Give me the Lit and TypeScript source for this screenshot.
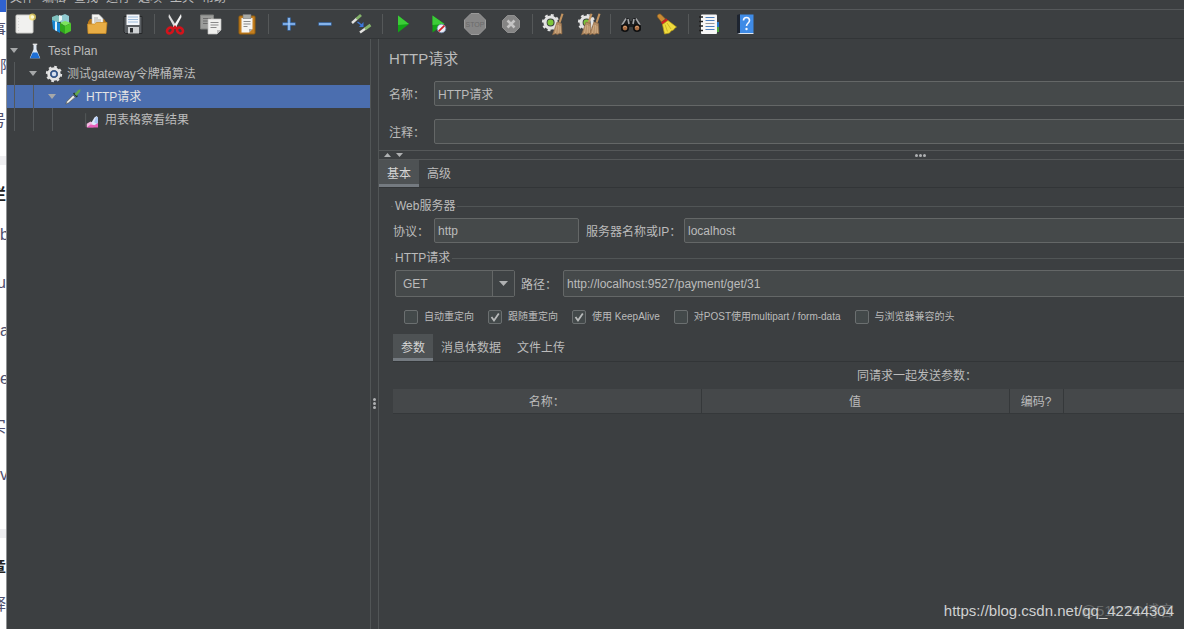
import { LitElement, html, css, svg, nothing } from "lit";
import { customElement, property, state } from "lit/decorators.js";
import { classMap } from "lit/directives/class-map.js";
import { styleMap } from "lit/directives/style-map.js";

const gear = svg`
  <circle cx="12" cy="12" r="7" fill="none" stroke="#e3e3e3" stroke-width="4"/>
  <circle cx="12" cy="12" r="9.6" fill="none" stroke="#e3e3e3" stroke-width="2.6" stroke-dasharray="3.6 3.94"/>`;

const broom = (x: number) => svg`
  <path d="M${x + 4.5} 1.500l2 .6-3 9-2-.6z" fill="#c2935f"/>
  <path d="M${x} 10l4.500 1.500 .5 10.500-2.500-.6-2 1.200-2-.8-3 1z" fill="#b58e66" stroke="#8b6642" stroke-width=".6"/>
  <path d="M${x} 13l-1.500 8M${x + 1.5} 13l-.3 8M${x + 3} 14l.4 7" stroke="#d9b78f" stroke-width=".7"/>`;

const ICONS: Record<string, unknown> = {
  new: svg`<rect x="3" y="3" width="17" height="18" rx="1" fill="#f1f1ef" stroke="#cfcfcb"/>
    <path d="M5.500 6v13" stroke="#d8d8d8" stroke-dasharray="1 2"/>
    <circle cx="19.500" cy="5" r="3.500" fill="#f4dc62" opacity=".75"/><circle cx="19.500" cy="5" r="1.800" fill="#fffbd0"/>`,
  templates: svg`<path d="M3 5l5-2 4 2v5H3z" fill="#7fc0bd"/><path d="M11 4l5-2 4 2v7h-8z" fill="#8fc9cf"/>
    <path d="M3 8l8 3v10l-7-4z" fill="#1585d2"/><path d="M6 9.300l2 .8v9.200l-2-1z" fill="#d9f0ff"/>
    <path d="M11 11l5-2 6 2-6 3z" fill="#7ce45c"/><path d="M11 11l5 3v8l-5-3z" fill="#2fa81c"/><path d="M16 14l6-3v8l-6 3z" fill="#4cc62c"/>
    <path d="M10 3l3 1v4l-3 2z" fill="#e8f5f5"/>`,
  open: svg`<path d="M3 10l2-3h14l2 3v11H3z" fill="#b9781a"/>
    <path d="M7 2.500h7l4 4V16H7z" fill="#f5f5f2" stroke="#bbb" stroke-width=".6"/><path d="M9 6h4M9 8h7M9 10h7" stroke="#999" stroke-width=".8"/>
    <path d="M2.500 12h7l2-1.500h10.500L21 21.500H3z" fill="#e8ad45" stroke="#c88920" stroke-width=".7"/>`,
  save: svg`<path d="M3 4.500h18v17H4.500L3 20z" fill="#5a5e62" stroke="#26282a"/>
    <rect x="5.500" y="2.500" width="13" height="10.500" fill="#f3f6fa"/><path d="M7 5h10M7 7.500h10M7 10h10" stroke="#9dbbd9" stroke-width="1"/>
    <rect x="7" y="15" width="11" height="6.500" fill="#cfd2d4"/><rect x="9" y="16" width="3" height="4.500" fill="#2b2e31"/>`,
  cut: svg`<path d="M6 2l8 13-2 2L5.500 5z" fill="#dcdcdc"/><path d="M18 2l-8 13 2 2 6.500-12z" fill="#f5f5f5"/>
    <ellipse cx="7" cy="18.500" rx="3.200" ry="2.600" transform="rotate(-40 7 18.500)" fill="none" stroke="#d3131b" stroke-width="2.600"/>
    <ellipse cx="17" cy="18.500" rx="3.200" ry="2.600" transform="rotate(40 17 18.500)" fill="none" stroke="#d3131b" stroke-width="2.600"/>
    <path d="M9.500 16l2.500-3 2.500 3-2.500 1.500z" fill="#d3131b"/>`,
  copy: svg`<path d="M1.500 3h13v14h-13z" fill="#9b9c9a" stroke="#7d7e7c"/><path d="M4 6.500h8M4 9h5M4 11.500h5" stroke="#6c6c6c"/>
    <path d="M9 7h13v11l-4 4H9z" fill="#f0f0ee" stroke="#bdbdbb" stroke-width=".7"/><path d="M11.500 10.500h8M11.500 13h8M11.500 15.500h6" stroke="#8a8a8a"/><path d="M18 22v-4h4z" fill="#bbb"/>`,
  paste: svg`<rect x="4" y="4" width="16" height="18" rx="1" fill="#c57f1f" stroke="#96600f"/>
    <path d="M6.500 6h11v11l-3.500 3.500H6.500z" fill="#f4f4f2"/><path d="M8 2.500h8v4H8z" fill="#a8aaa6" stroke="#777" stroke-width=".6"/>
    <path d="M8.500 9.500h7M8.500 12h7M8.500 14.500h4" stroke="#8a8a8a"/><path d="M14 20.500V17h3.500z" fill="#aaa"/>`,
  expand: svg`<path d="M12 5.500v13M5.500 12h13" stroke="#3f7fd0" stroke-width="3.200"/><path d="M12 6v12M6 12h12" stroke="#b5d6fb" stroke-width="1.200"/>`,
  collapse: svg`<path d="M5.500 12h13" stroke="#3f7fd0" stroke-width="3.200"/><path d="M6 12h12" stroke="#b5d6fb" stroke-width="1.200"/>`,
  toggle: svg`<path d="M3 11l5-4.500" stroke="#e2e2e0" stroke-width="2.400"/><path d="M7.500 7l4.500-4" stroke="#86b56b" stroke-width="2.800"/>
    <path d="M11 20.500l5.500-4" stroke="#e2e2e0" stroke-width="2.400"/><path d="M16 17l5.500-4" stroke="#86b56b" stroke-width="2.800"/>
    <path d="M8.500 10l4 3" stroke="#3c78dc" stroke-width="1.500"/><path d="M14.500 10v5H10z" fill="#3c78dc"/>`,
  start: svg`<path d="M7 3.500l11 8.500L7 20.500z" fill="#12a316"/><path d="M7 3.500l11 8.500L7 13z" fill="#3ccc38"/>`,
  startNoPause: svg`<path d="M5.500 3.500l12 8.500-12 8.500z" fill="#12a316"/><path d="M5.500 3.500l12 8.500-12 1z" fill="#3ccc38"/>
    <circle cx="14.500" cy="16.500" r="4.300" fill="#e9edf5" stroke="#7289b2" stroke-width=".8"/><path d="M11.600 19.400l5.800-5.800" stroke="#d0202a" stroke-width="1.700"/>`,
  stop: svg`<path d="M8 1.500h8l6.500 6.500v8L16 22.500H8L1.500 16V8z" fill="#868686" stroke="#999"/>
    <text x="12" y="15" text-anchor="middle" font-family="Liberation Sans, sans-serif" font-size="7" fill="#6a6a6a">STOP</text>`,
  shutdown: svg`<path d="M8.500 3.500h7l5 5v7l-5 5h-7l-5-5v-7z" fill="#858585" stroke="#8f8f8f"/>
    <path d="M8.500 8.500l7 7M15.500 8.500l-7 7" stroke="#c4c4c4" stroke-width="2.600"/>`,
  clear: svg`<g transform="translate(0 1) scale(.8)">${gear}</g><circle cx="9.500" cy="10.500" r="3" fill="#7cc63a"/>${broom(16)}`,
  clearAll: svg`<g transform="translate(0 1) scale(.8)">${gear}</g><circle cx="9.500" cy="10.500" r="3" fill="#7cc63a"/>${broom(9)}${broom(17)}`,
  search: svg`<path d="M6 6h4l1 3h2l1-3h4l4 8-.5 5h-6l-2-4h-3l-2 4H2.500L2 14z" fill="#1c1e20"/>
    <path d="M7 6.500l-4 6.500M17 6.500l4 6.500M9 7l1 5M15 7l-1 5" stroke="#a3a5a7" stroke-width="1.600"/>
    <circle cx="6" cy="16" r="3.200" fill="#a86d43" stroke="#0f1011" stroke-width="1.600"/><circle cx="18" cy="16" r="3.200" fill="#a86d43" stroke="#0f1011" stroke-width="1.600"/>
    <path d="M4.500 15.500c1-1.500 2-1.500 3 0M16.500 15.500c1-1.500 2-1.500 3 0" stroke="#dca67c" fill="none"/>`,
  resetSearch: svg`<path d="M2.500 5c-1-3 3-4 4-2l4 4-4 3z" fill="#c98a34" stroke="#8f5f1c" stroke-width=".6"/><path d="M6 10.500l5.500-4 1.500 2-5.500 4z" fill="#d42020"/>
    <path d="M7.500 12.500l5.500-4 8.500 6.500-2 1.500-1 1.500-2.500 1-1.500 2-2.500.5-2.500.5z" fill="#efdb3d" stroke="#b79b17" stroke-width=".7"/>
    <path d="M10 12.500l2.500 7M12 11l4 6" stroke="#c7ab20" stroke-width=".8"/>`,
  functions: svg`<rect x="17" y="10" width="5" height="5" fill="#2377c8"/><rect x="17" y="15" width="5" height="5" fill="#49a53c"/>
    <rect x="4" y="2.500" width="16" height="19.500" rx="1" fill="#f7f7f7"/>
    <path d="M8.500 5.500h9M8.500 8.500h9M8.500 14.500h9M8.500 17.500h9" stroke="#4c7fbd" stroke-width="1.200"/><path d="M8.500 11.500h9" stroke="#999"/>
    <path d="M2 5h4M2 9.500h4M2 14h4M2 18.500h4" stroke="#222" stroke-width="1.600"/>`,
  help: svg`<path d="M4 3l3-1v19l-3 1z" fill="#1d2430"/><rect x="7" y="2.500" width="13.500" height="18.500" fill="#3f8be6"/><path d="M4 22l3-1h13.500v1z" fill="#dfe6ef"/>
    <path d="M10.500 8.500c0-4 6-4 6 0 0 2.500-3 2.500-3 5.500" fill="none" stroke="#f4f8ff" stroke-width="1.600"/><circle cx="13.500" cy="17" r="1.200" fill="#f4f8ff"/>`,
  plan: svg`<path d="M10 3.500h4v6l5 12H5l5-12z" fill="#dfe8f2"/><path d="M9 14h6l3.500 7.500h-13z" fill="#1d6fd6"/><path d="M9 3h6" stroke="#fff" stroke-width="1.500"/>`,
  threads: svg`${gear}<circle cx="12" cy="12" r="5" fill="#34588f"/><circle cx="12" cy="12" r="3" fill="#d5deec"/>`,
  sampler: svg`<path d="M2.500 21.500l1-3.500L12 9.500l3 3L6 20z" fill="#d3d5d2" stroke="#4b4f4a" stroke-width=".8"/><path d="M5 19l8-8" stroke="#fff"/>
    <path d="M12 7.500l5 5 1.500-2-5-4.500z" fill="#23331f"/><path d="M14 8l5-5.500 3-1-.5 3.500-5 5.500z" fill="#63a84a"/>`,
  listener: svg`<path d="M3.500 3v18" stroke="#5c6062"/><path d="M5 21.500V17l5-3 4 2v5.500z" fill="#f3b9e0"/>
    <path d="M11 16l4-7 3-2.500 2 2V17l-5 3z" fill="#dfe8fb"/><path d="M15 15l2-6 1.500-1.500L20 9v9z" fill="#a9c6f3"/><path d="M5 22l5-4 5 1 5-3v6z" fill="#e85fbb"/>`,
};

const icon = (name: string) =>
  html`<svg viewBox="0 0 24 24" aria-hidden="true">${ICONS[name]}</svg>`;

@customElement("tool-bar")
class ToolBar extends LitElement {
  static styles = css`
    :host { display: flex; height: 28px; align-items: center; border-top: 1px solid #55585a; border-bottom: 1px solid #323537; }
    .tool { width: 36px; height: 26px; padding: 0; border: 0; background: none; display: grid; place-items: center; }
    .tool svg { width: 24px; height: 24px; display: block; }
    .sep { width: 6px; height: 20px; display: grid; justify-content: center; }
    .sep::before { content: ""; width: 1px; background: #555859; }
  `;
  private groups = [
    [["new", "新建"], ["templates", "模板"], ["open", "打开"], ["save", "保存"]],
    [["cut", "剪切"], ["copy", "复制"], ["paste", "粘贴"]],
    [["expand", "展开"], ["collapse", "收起"], ["toggle", "切换"]],
    [["start", "启动"], ["startNoPause", "无间隔启动"], ["stop", "停止"], ["shutdown", "关闭"]],
    [["clear", "清除"], ["clearAll", "清除全部"]],
    [["search", "查找"], ["resetSearch", "重置查找"]],
    [["functions", "函数助手"], ["help", "帮助"]],
  ];
  render() {
    return this.groups.map((g, i) => html`
      ${i ? html`<span class="sep"></span>` : nothing}
      ${g.map(([n, l]) => html`<button class="tool" type="button" aria-label=${l}>${icon(n)}</button>`)}`);
  }
}

@customElement("plan-tree")
class PlanTree extends LitElement {
  static styles = css`
    :host { display: block; color: #bbbbbb; }
    .row { display: flex; height: 23px; align-items: center; white-space: nowrap; }
    .row.selected { background: #4b6eaf; color: #e4e4e4; }
    .guide { width: 19px; height: 23px; box-sizing: border-box; padding-left: 7px; }
    .guide::before { content: ""; display: block; width: 1px; height: 100%; background: #55595b; }
    .toggle { width: 14px; height: 23px; padding: 0; border: 0; background: none; display: grid; place-items: center; }
    .toggle svg { width: 8px; height: 5px; display: block; }
    .icon { width: 20px; margin-left: 4px; display: grid; place-items: center; }
    .icon.leaf { margin-left: 18px; }
    .icon svg { width: 18px; height: 18px; display: block; }
    .label { margin-left: 3px; padding-top: 2px; line-height: 21px; }
  `;
  @state() private selected = 2;
  private rows = [
    { icon: "plan", label: "Test Plan" },
    { icon: "threads", label: "测试gateway令牌桶算法" },
    { icon: "sampler", label: "HTTP请求" },
    { icon: "listener", label: "用表格察看结果", leaf: true },
  ];
  render() {
    return this.rows.map((r, i) => html`
      <div class=${classMap({ row: true, selected: i === this.selected })} @click=${() => (this.selected = i)}>
        ${Array.from({ length: i }, () => html`<span class="guide"></span>`)}
        ${r.leaf ? nothing : html`<button class="toggle" type="button" aria-label="折叠">
          <svg viewBox="0 0 8 5"><path d="M0 0h8L4 5z" fill="#a6a8a9"/></svg></button>`}
        <span class=${classMap({ icon: true, leaf: !!r.leaf })}>${icon(r.icon)}</span>
        <span class="label">${r.label}</span>
      </div>`);
  }
}

@customElement("tab-strip")
class TabStrip extends LitElement {
  static styles = css`
    :host { display: flex; height: 27px; border-bottom: 1px solid #323537; }
    .tab { font: inherit; color: inherit; padding: 5px 8px 0; border: 0; border-bottom: 3px solid transparent; background: none; line-height: 19px; }
    .tab.active { background: #4e5254; border-bottom-color: #747a80; color: #d5d5d5; }
  `;
  @property({ type: Array }) tabs: string[] = [];
  @state() private active = 0;
  render() {
    return this.tabs.map((t, i) => html`<button type="button" class=${classMap({ tab: true, active: i === this.active })}
      @click=${() => (this.active = i)}>${t}</button>`);
  }
}

@customElement("http-request-panel")
class HttpRequestPanel extends LitElement {
  static styles = css`
    :host { display: block; }
    .head { padding: 10px 0 6px 10px; }
    .title { margin: 0 0 12px; font-size: 15px; font-weight: 400; line-height: 20px; }
    .fields { display: grid; grid-template-columns: 45px 1fr; row-gap: 13px; align-items: center; }
    label { white-space: nowrap; padding-top: 2px; }
    .text { box-sizing: border-box; width: 100%; min-width: 0; height: 25px; padding: 0 3px; border: 1px solid #646767; border-radius: 2px;
      background: #45494a; color: #bbbbbb; font: inherit; outline: 0; }
    .split { display: grid; grid-template-columns: 1fr auto 1fr; align-items: center; height: 8px; border-top: 1px solid #555859; border-bottom: 1px solid #555859; }
    .arrows { display: flex; gap: 5px; padding-left: 5px; }
    .arrows svg { width: 7px; height: 4px; display: block; }
    .dots { display: flex; gap: 1px; }
    .dots i { width: 3px; height: 3px; border-radius: 2px; background: #afb1b2; }
    .body { padding: 10px 0 0 12px; }
    fieldset { margin: 0 0 7px; padding: 4px 0 0; border: 0; border-top: 1px solid #515556; min-width: 0; }
    legend { margin-left: 2px; padding: 0 2px; line-height: 16px; }
    .server { display: grid; grid-template-columns: 41px 145px 105px 1fr; align-items: center; padding-left: 2px; }
    .server .second { padding-left: 7px; }
    .target { display: grid; grid-template-columns: 120px 48px 1fr; align-items: center; padding-left: 4px; }
    .target .text, .combo { height: 27px; }
    .target label { padding-left: 6px; }
    .combo { display: grid; grid-template-columns: 1fr 22px; box-sizing: border-box; border: 1px solid #646767; border-radius: 2px; background: #45494a; }
    .combo select { grid-area: 1 / 1 / 2 / 3; appearance: none; border: 0; background: none; color: inherit; font: inherit; padding: 0 7px; outline: 0; }
    .combo .drop { grid-area: 1 / 2; border-left: 1px solid #646767; background: #3f4345; display: grid; place-items: center; pointer-events: none; }
    .drop svg { width: 9px; height: 5px; display: block; }
    .checks { display: flex; gap: 14px; padding: 13px 0 3px 13px; font-size: 10px; }
    .checks label { display: flex; gap: 6px; align-items: center; line-height: 14px; padding: 0; }
    .checks input { appearance: none; box-sizing: border-box; width: 14px; height: 14px; margin: 0; border: 1px solid #6b6f70; border-radius: 2px; background: #43494a; }
    .checks input:checked { background: #43494a url("data:image/svg+xml,%3Csvg xmlns='http://www.w3.org/2000/svg' viewBox='0 0 12 12'%3E%3Cpath d='M2.500 6l2.500 3.500L9.800 2.500' fill='none' stroke='%23b8baba' stroke-width='1.800'/%3E%3C/svg%3E"); }
    .params { padding: 0 20px 0 2px; }
    table { width: 100%; table-layout: fixed; border-collapse: collapse; }
    caption { padding-top: 2px; line-height: 25px; }
    th { height: 24px; box-sizing: border-box; padding: 2px 0 0; font-weight: 400; background: #45484a; border-right: 1px solid #35383a; border-bottom: 1px solid #35383a; }
    .wide { width: 308px; }
    .narrow { width: 54px; }
  `;
  private checks: [string, boolean][] = [
    ["自动重定向", false], ["跟随重定向", true], ["使用 KeepAlive", true],
    ["对POST使用multipart / form-data", false], ["与浏览器兼容的头", false],
  ];
  render() {
    return html`
      <section class="head">
        <h1 class="title">HTTP请求</h1>
        <div class="fields">
          <label for="name">名称：</label><input class="text" id="name" .value=${"HTTP请求"}>
          <label for="note">注释：</label><input class="text" id="note">
        </div>
      </section>
      <div class="split">
        <span class="arrows">
          <svg viewBox="0 0 7 4"><path d="M0 4h7L3.500 0z" fill="#afb1b2"/></svg>
          <svg viewBox="0 0 7 4"><path d="M0 0h7L3.500 4z" fill="#afb1b2"/></svg>
        </span>
        <span class="dots"><i></i><i></i><i></i></span>
      </div>
      <tab-strip .tabs=${["基本", "高级"]}></tab-strip>
      <section class="body">
        <fieldset>
          <legend>Web服务器</legend>
          <div class="server">
            <label for="protocol">协议：</label><input class="text" id="protocol" .value=${"http"}>
            <label class="second" for="host">服务器名称或IP：</label><input class="text" id="host" .value=${"localhost"}>
          </div>
        </fieldset>
        <fieldset>
          <legend>HTTP请求</legend>
          <div class="target">
            <span class="combo">
              <select aria-label="方法"><option>GET</option><option>POST</option><option>PUT</option></select>
              <span class="drop"><svg viewBox="0 0 9 5"><path d="M0 0h9L4.500 5z" fill="#afb1b2"/></svg></span>
            </span>
            <label for="path">路径：</label><input class="text" id="path" .value=${"http://localhost:9527/payment/get/31"}>
          </div>
          <div class="checks">
            ${this.checks.map(([l, on]) => html`<label><input type="checkbox" .checked=${on}>${l}</label>`)}
          </div>
        </fieldset>
        <div class="params">
          <tab-strip .tabs=${["参数", "消息体数据", "文件上传"]}></tab-strip>
          <table>
            <caption>同请求一起发送参数：</caption>
            <thead><tr><th class="wide">名称：</th><th class="wide">值</th><th class="narrow">编码?</th><th></th></tr></thead>
          </table>
        </div>
      </section>`;
  }
}

interface Snippet { h: number; t?: string; kind?: string; end?: boolean }

@customElement("app-root")
class AppRoot extends LitElement {
  static styles = css`
    :host { display: flex; position: relative; height: 100vh; overflow: hidden; background: #3c3f41; color: #bbbbbb;
      font: 12px/16px "Liberation Sans", "Noto Sans CJK SC", sans-serif; }
    .behind { flex: none; width: 6px; overflow: hidden; background: #fff; border-right: 1px solid #8f9192; color: #50506e; font-size: 16px; line-height: 32px; }
    .line { display: flex; align-items: center; white-space: nowrap; overflow: hidden; }
    .line.end { justify-content: flex-end; }
    .line.blue { background: #2f62d0; }
    .line.band { background: #efeff1; }
    .line.heading { align-items: flex-end; font-weight: 700; color: #222; }
    .window { flex: 1; min-width: 0; margin: 0 -277px -138px 0; display: flex; flex-direction: column; }
    .menu { display: flex; gap: 8px; align-items: flex-end; height: 5px; padding: 0 0 4px 3px; line-height: 14px; }
    .menu a { color: inherit; text-decoration: none; }
    .work { flex: 1; min-height: 0; display: grid; grid-template-columns: 363px 9px 1fr; }
    .divider { box-sizing: border-box; border: solid #515556; border-width: 0 1px; display: flex; flex-direction: column; gap: 1px; align-items: center; justify-content: center; }
    .divider i { width: 3px; height: 3px; border-radius: 2px; background: #afb1b2; }
    .mark { position: absolute; right: 10px; bottom: 8px; font-size: 15px; line-height: 20px; color: #d0d1d1; }
    .mark.faint { color: #686b6c; }
  `;
  private behind: Snippet[] = [
    { h: 12, kind: "blue" }, { h: 36, t: "事", end: true }, { h: 38, t: "阿" }, { h: 70, t: "号", end: true },
    { h: 9, kind: "band" }, { h: 46, t: "栏", kind: "heading", end: true }, { h: 48, t: "b" }, { h: 48, t: "u", end: true },
    { h: 48, t: "a" }, { h: 48, t: "e" }, { h: 48, t: "实", end: true }, { h: 48, t: "v" }, { h: 30 },
    { h: 9, kind: "band" }, { h: 46, t: "章", kind: "heading", end: true }, { h: 42, t: "释", end: true },
  ];
  private menus = ["文件", "编辑", "查找", "运行", "选项", "工具", "帮助"];
  render() {
    return html`
      <aside class="behind" aria-hidden="true">
        ${this.behind.map((s) => html`<div class=${classMap({ line: true, end: !!s.end, [s.kind ?? "plain"]: true })}
          style=${styleMap({ height: `${s.h}px` })}>${s.t ?? nothing}</div>`)}
      </aside>
      <main class="window">
        <nav class="menu">${this.menus.map((m) => html`<a href="#">${m}</a>`)}</nav>
        <tool-bar></tool-bar>
        <div class="work">
          <plan-tree></plan-tree>
          <div class="divider"><i></i><i></i><i></i></div>
          <http-request-panel></http-request-panel>
        </div>
      </main>
      <span class="mark faint">@51CTO博客</span>
      <span class="mark">https://blog.csdn.net/qq_42244304</span>`;
  }
}
